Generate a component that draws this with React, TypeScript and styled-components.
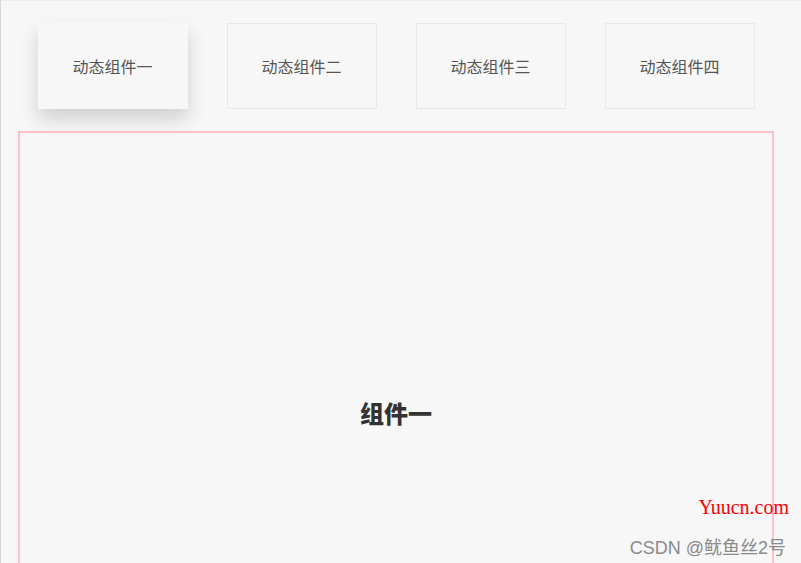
import React, { useState } from "react";
import styled, { createGlobalStyle } from "styled-components";

const Global = createGlobalStyle`
  html, body { margin: 0; padding: 0; background: #f7f7f7; }
  body { font-family: "Noto Sans CJK SC", "Noto Sans", sans-serif; overflow: hidden; }
`;

const Page = styled.div`
  position: relative;
  width: 801px;
  height: 563px;
  box-sizing: border-box;
  border-left: 1px solid #d6d6d6;
  border-top: 1px solid #ececec;
  background: #f7f7f7;
  padding: 22px 27px 0 17px;
  overflow: hidden;
`;

const Tabs = styled.div`
  display: flex;
  justify-content: space-around;
`;

const Tab = styled.div<{ $active: boolean }>`
  width: 150px;
  height: 86px;
  box-sizing: border-box;
  border: 1px solid ${(p) => (p.$active ? "#f7f7f7" : "#e8e8e8")};
  display: flex;
  align-items: center;
  justify-content: center;
  font-size: 16px;
  color: #555;
  cursor: pointer;
  box-shadow: ${(p) => (p.$active ? "0 10px 18px rgba(0,0,0,0.16)" : "none")};
`;

const Content = styled.div`
  margin-top: 22px;
  height: 460px;
  border: 2px solid #ffc0cb;
  border-bottom: none;
  display: flex;
  align-items: center;
  justify-content: center;
  padding-top: 100px;
  box-sizing: border-box;
`;

const Title = styled.h2`
  margin: 0;
  font-size: 24px;
  font-weight: 900;
  color: #333;
`;

const Mark = styled.div`
  position: absolute;
  right: 12px;
  top: 495px;
  color: #ff0000;
  font-family: "Liberation Serif", serif;
  font-size: 20px;
`;

const Credit = styled.div`
  position: absolute;
  right: 15px;
  top: 532px;
  color: #8a8a8a;
  font-size: 18px;
  font-family: "Liberation Sans", "Noto Sans CJK SC", sans-serif;
`;

const names = ["一", "二", "三", "四"];

export default function App() {
  const [active, setActive] = useState(0);
  return (
    <Page>
      <Global />
      <Tabs>
        {names.map((n, i) => (
          <Tab key={n} $active={active === i} onClick={() => setActive(i)}>
            动态组件{n}
          </Tab>
        ))}
      </Tabs>
      <Content>
        <Title>组件{names[active]}</Title>
      </Content>
      <Mark>Yuucn.com</Mark>
      <Credit>CSDN @鱿鱼丝2号</Credit>
    </Page>
  );
}
